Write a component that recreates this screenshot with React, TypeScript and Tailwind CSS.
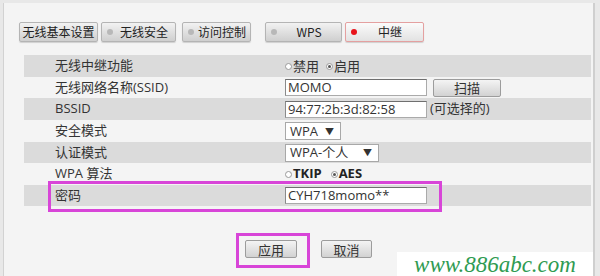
import React from 'react';

const cn = '"Noto Sans CJK SC", sans-serif';
const mixed = '"Open Sans", "Noto Sans CJK SC", sans-serif';

const Tab = ({ label, dot, active, className }: { label: string; dot?: boolean; active?: boolean; className: string }) => (
  <div
    className={`h-[20px] flex items-center rounded-[2px] border text-[12px] text-[#222] whitespace-nowrap shadow-[0_1px_1px_rgba(0,0,0,0.15)] ${
      active
        ? 'border-[#e4a0a0] bg-gradient-to-b from-[#fbfbfb] to-[#e2e2e2]'
        : 'border-[#b4b4b4] bg-gradient-to-b from-[#f2f2f2] to-[#cfcfcf]'
    } ${className}`}
    style={{ fontFamily: cn }}
  >
    {dot && (
      <span
        className={`ml-[5px] h-[6px] w-[6px] rounded-full shrink-0 ${active ? 'bg-[#e8131b]' : 'bg-[#b8b8b8]'}`}
      />
    )}
    <span className="flex-1 text-center leading-none">{label}</span>
  </div>
);

const Radio = ({ checked }: { checked?: boolean }) => (
  <span className="inline-flex h-[7px] w-[7px] items-center justify-center rounded-full border border-[#9a9a9a] bg-white mr-[1px]">
    {checked && <span className="h-[3px] w-[3px] rounded-full bg-[#555]" />}
  </span>
);

const Input = ({ value, width }: { value: string; width: string }) => (
  <div
    className={`${width} h-[17px] bg-white border border-[#aaa] border-t-[#6f6f6f] border-l-[#8a8a8a] flex items-center pl-[2px] text-[13px] text-[#333] leading-none`}
    style={{ fontFamily: mixed }}
  >
    {value}
  </div>
);

const Select = ({ value, width }: { value: string; width: string }) => (
  <div
    className={`${width} h-[18px] bg-white border border-[#a8a8a8] flex items-center justify-between pl-[4px] pr-[6px] text-[13px] text-[#333] leading-none`}
    style={{ fontFamily: mixed }}
  >
    <span>{value}</span>
    <span className="text-[9px]">▼</span>
  </div>
);

const Button = ({ label, width }: { label: string; width: string }) => (
  <div
    className={`${width} h-[18px] rounded-[2px] border border-[#9c9c9c] bg-gradient-to-b from-[#f4f4f4] to-[#d2d2d2] flex items-center justify-center text-[13px] text-[#333] leading-none`}
    style={{ fontFamily: cn }}
  >
    {label}
  </div>
);

const rows: { label: string; h: string; gray: boolean; value: React.ReactNode }[] = [
  {
    label: '无线中继功能',
    h: 'h-[22px]',
    gray: true,
    value: (
      <div className="flex items-center text-[13px] text-[#333]" style={{ fontFamily: cn }}>
        <Radio />
        <span className="mr-[7px]">禁用</span>
        <Radio checked />
        <span>启用</span>
      </div>
    ),
  },
  {
    label: '无线网络名称(SSID)',
    h: 'h-[21px]',
    gray: false,
    value: (
      <div className="flex items-center">
        <Input value="MOMO" width="w-[142px]" />
        <div className="ml-[6px]">
          <Button label="扫描" width="w-[68px]" />
        </div>
      </div>
    ),
  },
  {
    label: 'BSSID',
    h: 'h-[22px]',
    gray: true,
    value: (
      <div className="flex items-center">
        <Input value="94:77:2b:3d:82:58" width="w-[142px]" />
        <span className="ml-[3px] text-[13px] text-[#333]" style={{ fontFamily: mixed }}>
          (可选择的)
        </span>
      </div>
    ),
  },
  { label: '安全模式', h: 'h-[22px]', gray: false, value: <Select value="WPA" width="w-[56px]" /> },
  { label: '认证模式', h: 'h-[21px]', gray: true, value: <Select value="WPA-个人" width="w-[94px]" /> },
  {
    label: 'WPA 算法',
    h: 'h-[22px]',
    gray: false,
    value: (
      <div className="flex items-center text-[13px] font-bold text-[#222]" style={{ fontFamily: mixed }}>
        <Radio />
        <span className="mr-[9px]">TKIP</span>
        <Radio checked />
        <span>AES</span>
      </div>
    ),
  },
  { label: '密码', h: 'h-[21px]', gray: true, value: <Input value="CYH718momo**" width="w-[142px]" /> },
];

const App: React.FC = () => {
  return (
    <div className="relative w-[600px] h-[276px] overflow-hidden bg-[#e8e8e8] pt-[3px] pl-[3px]">
      <div className="w-[592px] h-[273px] bg-[#f4f4f4] border-l border-[#d2d2d2] border-r-2 border-r-[#cfcfcf]">
        {/* Tabs */}
        <div className="flex pt-[19px] pl-[15px]">
          <Tab label="无线基本设置" className="w-[79px]" />
          <Tab label="无线安全" dot className="w-[75px] ml-[3px]" />
          <Tab label="访问控制" dot className="w-[69px] ml-[6px]" />
          <Tab label="WPS" dot className="w-[77px] ml-[14px]" />
          <Tab label="中继" dot active className="w-[79px] ml-[3px]" />
        </div>

        {/* Settings table */}
        <div className="mt-[13px] ml-[20px] w-[567px]">
          {rows.map((row) => (
            <div key={row.label} className={`flex ${row.h} ${row.gray ? 'bg-[#dbdbdb]' : 'bg-[#f4f4f4]'}`}>
              <div
                className="w-[260px] pl-[31px] flex items-center text-[13px] text-[#333]"
                style={{ fontFamily: mixed }}
              >
                {row.label}
              </div>
              <div className="flex-1 flex items-center pl-[1px]">{row.value}</div>
            </div>
          ))}
        </div>

        {/* Buttons */}
        <div className="flex mt-[34px] pl-[241px] gap-[24px]">
          <Button label="应用" width="w-[52px]" />
          <Button label="取消" width="w-[51px]" />
        </div>
      </div>

      {/* Highlight boxes */}
      <div className="absolute left-[48px] top-[181px] w-[394px] h-[31px] border-[3px] border-[#d845d8]" />
      <div className="absolute left-[236px] top-[233px] w-[74px] h-[35px] border-[3px] border-[#d845d8]" />

      {/* Watermark */}
      <div className="absolute left-[397px] top-[252px] w-[196px] h-[24px] bg-white flex items-center justify-center">
        <span
          className="italic text-[23px] leading-none text-[#2f9b52] whitespace-nowrap"
          style={{ fontFamily: '"Liberation Serif", serif' }}
        >
          www.886abc.com
        </span>
      </div>
    </div>
  );
};

export default App;
